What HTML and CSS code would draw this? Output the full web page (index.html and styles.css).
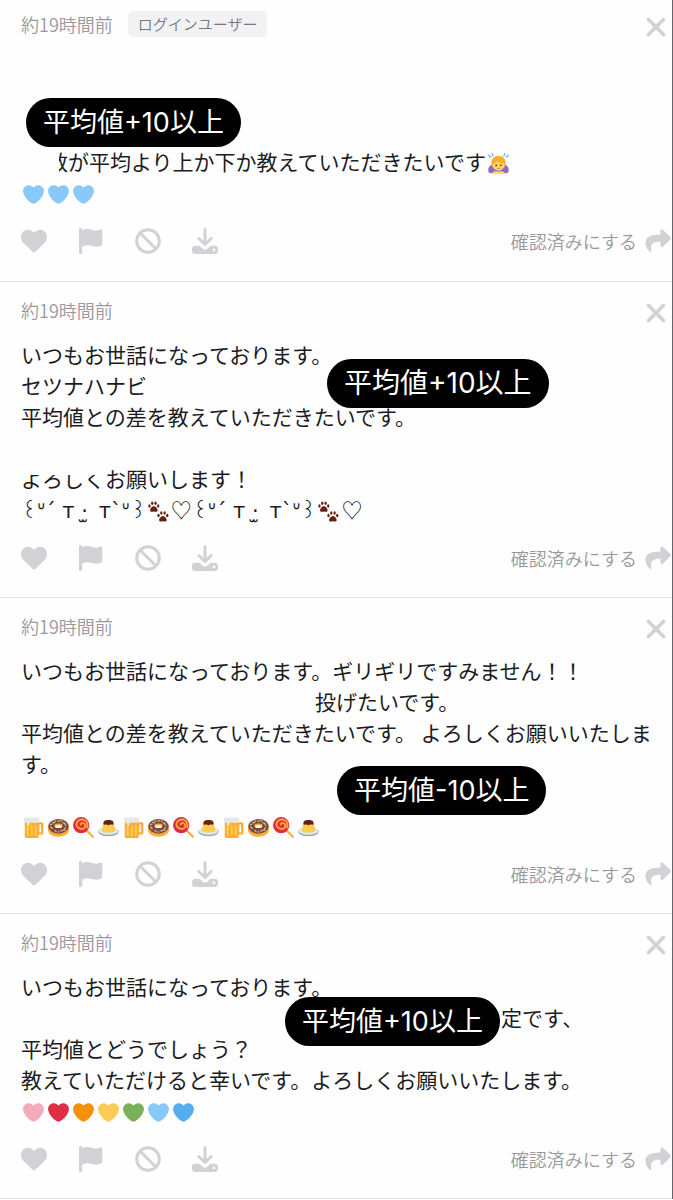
FILE: index.html
```html
<!DOCTYPE html>
<html lang="ja">
<head>
    <meta charset="UTF-8">
    <meta name="viewport" content="width=device-width, initial-scale=1.0">
    <title>メッセージ一覧</title>
    <link rel="stylesheet" href="styles.css">
</head>
<body>
    <!-- アイコン定義 -->
    <svg class="sprite" aria-hidden="true">
        <symbol id="close" viewBox="0 0 20 20"><path d="M2.5 2.5l15 15M17.5 2.5l-15 15" fill="none" stroke="currentColor" stroke-width="3.6" stroke-linecap="round"/></symbol>
        <symbol id="like" viewBox="0 0 26 26"><path d="M13 24.5c-.5 0-.9-.2-1.200-.5L2.300 14.800C-1 11.300-.6 5.600 3 3c3-2.200 7-1.300 9.300 1.200l.7.700.7-.7C16 1.700 20 .8 23 3c3.600 2.600 4 8.300.7 11.800L14.200 24c-.3.300-.7.500-1.200.5z" fill="currentColor"/></symbol>
        <symbol id="flag" viewBox="0 0 26 26"><path d="M2.600 0C3.500 0 4.200.7 4.200 1.600v.6c4.600-1.600 7.300-1.300 10.200-.2 3 1.100 5.200.8 8-.4.900-.4 1.800.2 1.800 1.100v13.600c0 .6-.3 1.100-.9 1.300-3.500 1.500-6.300 1.500-9.400.4-3.100-1-6-.9-9.700.4v6c0 .9-.7 1.600-1.600 1.600S1 25.300 1 24.400V1.600C1 .7 1.700 0 2.600 0z" fill="currentColor"/></symbol>
        <symbol id="ban" viewBox="0 0 26 26"><g fill="none" stroke="currentColor" stroke-width="3"><circle cx="13" cy="13" r="11.300"/><path d="M5 5l16 16"/></g></symbol>
        <symbol id="save" viewBox="0 0 26 26"><path d="M13 1.500v14M6.800 10.500l6.200 6 6.200-6" fill="none" stroke="currentColor" stroke-width="3" stroke-linecap="round" stroke-linejoin="round"/><path d="M3 17.800h4.500l3.600 3.300c1.100 1 2.700 1 3.800 0l3.600-3.300H23c1.700 0 3 1.300 3 3v2.200c0 1.700-1.300 3-3 3H3c-1.700 0-3-1.300-3-3v-2.200c0-1.700 1.300-3 3-3zm19 2.800a1.300 1.300 0 1 0 0 2.600 1.300 1.300 0 0 0 0-2.600z" fill="currentColor" fill-rule="evenodd"/></symbol>
        <symbol id="share" viewBox="0 0 26 26"><path d="M15.500 3.200c0-1.400 1.600-2.100 2.600-1.200l7.300 7.100c.7.700.7 1.700 0 2.300l-7.300 7.200c-1 .9-2.600.2-2.600-1.200v-3.700C8.300 13.600 4.600 16 6.600 22.700c.3 1.100-.9 1.800-1.700 1.100C2.300 21.600.4 18.600.4 15.300.4 8.600 6.300 6.700 15.500 6.600z" fill="currentColor"/></symbol>

        <symbol id="heart" viewBox="0 0 36 36"><path d="M35.885 11.833c0-5.450-4.418-9.868-9.867-9.868-3.308 0-6.227 1.633-8.018 4.129-1.791-2.496-4.710-4.129-8.017-4.129-5.450 0-9.868 4.417-9.868 9.868 0 .772.098 1.520.266 2.241C1.751 22.587 11.216 31.568 18 34.034c6.783-2.466 16.249-11.447 17.617-19.959.170-.721.268-1.469.268-2.242z" fill="currentColor"/></symbol>
        <symbol id="bow" viewBox="0 0 36 36">
            <path d="M1 33c-2-8 2-13 8-13h18c6 0 10 5 8 13-2 2-7 2-10 1H11c-3 1-8 1-10-1z" fill="#9268ca"/>
            <path d="M8 33c3-2 7-2 10-1 3-1 7-1 10 1v3H8z" fill="#ffdc5d"/>
            <circle cx="18" cy="17" r="12.500" fill="#ffac33"/>
            <path d="M8 19c3-1 5-2 7-5 3 3 8 4 13 4 0 8-4 12-10 12S8 26 8 19z" fill="#ffdc5d"/>
            <circle cx="14" cy="21" r="1.500" fill="#662113"/><circle cx="22" cy="21" r="1.500" fill="#662113"/>
            <path d="M15 26q3 1 6 0" fill="none" stroke="#c1694f" stroke-width="1.500"/>
            <path d="M7 1l2 4M1 4l4 3M29 1l-2 4M35 4l-4 3" stroke="#5dadec" stroke-width="2" stroke-linecap="round"/>
        </symbol>
        <symbol id="beer" viewBox="0 0 36 36">
            <path d="M26 9h6c2 0 3 1 3 3v15c0 2-1 3-3 3h-6zm2 4v13h3V13z" fill="#ffac33" fill-rule="evenodd"/>
            <path d="M3 8h24v25c0 2-1 3-3 3H6c-2 0-3-1-3-3z" fill="#ffac33"/>
            <path d="M8 16v15M15 16v15M22 16v15" stroke="#ffcc4d" stroke-width="3.500" stroke-linecap="round"/>
            <path d="M1 2q4-3 8 0 5-3 9 0 5-3 9 0 2 5-1 8H11v3c-1 2-4 2-4 0v-3H3Q0 7 1 2z" fill="#e6e7e8"/>
        </symbol>
        <symbol id="donut" viewBox="0 0 36 36">
            <path d="M0 17h36v5c0 7-8 12-18 12S0 29 0 22z" fill="#ffac33"/>
            <ellipse cx="18" cy="16" rx="17.500" ry="12.500" fill="#7b4b3e"/>
            <ellipse cx="18" cy="15" rx="7" ry="4" fill="#ffac33"/>
            <ellipse cx="18" cy="16.500" rx="5.500" ry="2.500" fill="#fff"/>
            <path d="M5 17l2 3M8 9l3 1M17 7l3-1M26 10l3 1M30 18l-2 3M22 24l3-1M12 23l2 2" stroke="#f4abba" stroke-width="2.200" stroke-linecap="round"/>
            <path d="M12 6l1 2M4 13l3-1M24 6l-1 2M31 14l-2-1M18 25v1M27 22l2 1" stroke="#a6d388" stroke-width="2" stroke-linecap="round"/>
        </symbol>
        <symbol id="lollipop" viewBox="0 0 36 36">
            <path d="M22 22l12 12" stroke="#ffac33" stroke-width="3.500" stroke-linecap="round"/>
            <circle cx="14" cy="14" r="14" fill="#dd2e44"/>
            <path d="M14 14c-2-3 3-6 6-2 4 6-4 11-10 7C2 14 7 4 16 4c7 1 11 8 8 15" fill="none" stroke="#ffac33" stroke-width="3"/>
        </symbol>
        <symbol id="pudding" viewBox="0 0 36 36">
            <ellipse cx="18" cy="25" rx="18" ry="8" fill="#99aab5"/><ellipse cx="18" cy="23.500" rx="17.500" ry="7" fill="#e1e8ed"/>
            <path d="M10 8h16l4 15c-2 5-22 5-24 0z" fill="#ffcc4d"/>
            <path d="M10 8c0-4 16-4 16 0l1 4c-1 2-3 1-5 1s-2 1-4 1-2-1-4-1-4 1-5-1z" fill="#662113"/>
        </symbol>
        <symbol id="paws" viewBox="0 0 36 36">
            <g id="paw" fill="#662113"><path d="M3.500 16c0-3 3-7 6.500-7s6.500 4 6.500 7c0 3-3 3-6.500 2-3.500 1-6.500 1-6.500-2z"/><ellipse cx="2.500" cy="8.500" rx="2" ry="3"/><ellipse cx="7.300" cy="4" rx="2" ry="3"/><ellipse cx="13" cy="4" rx="2" ry="3"/><ellipse cx="17.500" cy="8.500" rx="2" ry="3"/></g>
            <use href="#paw" x="15.500" y="16.500"/>
        </symbol>
    </svg>

    <main class="messages">
        <article class="message first">
            <header class="message-header">
                <time>約19時間前</time>
                <span class="tag">ログインユーザー</span>
                <button class="close" aria-label="閉じる"><svg><use href="#close"/></svg></button>
            </header>
            <div class="message-body">
                <p><br></p>
                <p><br></p>
                <p><br></p>
                <p class="indent-small"><span class="cut-half">数</span>が平均より上か下か教えていただきたいです<svg class="emoji"><use href="#bow"/></svg></p>
                <p><svg class="emoji light-blue"><use href="#heart"/></svg><svg class="emoji light-blue"><use href="#heart"/></svg><svg class="emoji light-blue"><use href="#heart"/></svg></p>
            </div>
            <footer class="message-footer">
                <button aria-label="いいね"><svg><use href="#like"/></svg></button>
                <button aria-label="通報"><svg><use href="#flag"/></svg></button>
                <button aria-label="ブロック"><svg><use href="#ban"/></svg></button>
                <button aria-label="保存"><svg><use href="#save"/></svg></button>
                <button class="confirm">確認済みにする</button>
                <button aria-label="返信"><svg><use href="#share"/></svg></button>
            </footer>
            <strong class="score score-1">平均値+10以上</strong>
        </article>

        <article class="message">
            <header class="message-header">
                <time>約19時間前</time>
                <button class="close" aria-label="閉じる"><svg><use href="#close"/></svg></button>
            </header>
            <div class="message-body">
                <p>いつもお世話になっております。</p>
                <p>セツナハナビ</p>
                <p>平均値との差を教えていただきたいです。</p>
                <p><br></p>
                <p><span class="cut-top">よろしく</span>お願いします！</p>
                <p><span class="kaomoji">꒰ᐡ´ т ·̫ &thinsp;т`ᐡ꒱</span><svg class="emoji"><use href="#paws"/></svg>♡<span class="kaomoji">꒰ᐡ´ т ·̫ &thinsp;т`ᐡ꒱</span><svg class="emoji"><use href="#paws"/></svg>♡</p>
            </div>
            <footer class="message-footer">
                <button aria-label="いいね"><svg><use href="#like"/></svg></button>
                <button aria-label="通報"><svg><use href="#flag"/></svg></button>
                <button aria-label="ブロック"><svg><use href="#ban"/></svg></button>
                <button aria-label="保存"><svg><use href="#save"/></svg></button>
                <button class="confirm">確認済みにする</button>
                <button aria-label="返信"><svg><use href="#share"/></svg></button>
            </footer>
            <strong class="score score-2">平均値+10以上</strong>
        </article>

        <article class="message">
            <header class="message-header">
                <time>約19時間前</time>
                <button class="close" aria-label="閉じる"><svg><use href="#close"/></svg></button>
            </header>
            <div class="message-body">
                <p>いつもお世話になっております。ギリギリですみません！！</p>
                <p class="indent-medium">投げたいです。</p>
                <p>平均値との差を教えていただきたいです。 よろしくお願いいたします。</p>
                <p><br></p>
                <p><svg class="emoji"><use href="#beer"/></svg><svg class="emoji"><use href="#donut"/></svg><svg class="emoji"><use href="#lollipop"/></svg><svg class="emoji"><use href="#pudding"/></svg><svg class="emoji"><use href="#beer"/></svg><svg class="emoji"><use href="#donut"/></svg><svg class="emoji"><use href="#lollipop"/></svg><svg class="emoji"><use href="#pudding"/></svg><svg class="emoji"><use href="#beer"/></svg><svg class="emoji"><use href="#donut"/></svg><svg class="emoji"><use href="#lollipop"/></svg><svg class="emoji"><use href="#pudding"/></svg></p>
            </div>
            <footer class="message-footer">
                <button aria-label="いいね"><svg><use href="#like"/></svg></button>
                <button aria-label="通報"><svg><use href="#flag"/></svg></button>
                <button aria-label="ブロック"><svg><use href="#ban"/></svg></button>
                <button aria-label="保存"><svg><use href="#save"/></svg></button>
                <button class="confirm">確認済みにする</button>
                <button aria-label="返信"><svg><use href="#share"/></svg></button>
            </footer>
            <strong class="score score-3">平均値-10以上</strong>
        </article>

        <article class="message">
            <header class="message-header">
                <time>約19時間前</time>
                <button class="close" aria-label="閉じる"><svg><use href="#close"/></svg></button>
            </header>
            <div class="message-body">
                <p>いつもお世話になっております。</p>
                <p class="indent-large">定です、</p>
                <p>平均値とどうでしょう？</p>
                <p>教えていただけると幸いです。よろしくお願いいたします。</p>
                <p><svg class="emoji pink"><use href="#heart"/></svg><svg class="emoji red"><use href="#heart"/></svg><svg class="emoji orange"><use href="#heart"/></svg><svg class="emoji yellow"><use href="#heart"/></svg><svg class="emoji green"><use href="#heart"/></svg><svg class="emoji light-blue"><use href="#heart"/></svg><svg class="emoji blue"><use href="#heart"/></svg></p>
            </div>
            <footer class="message-footer">
                <button aria-label="いいね"><svg><use href="#like"/></svg></button>
                <button aria-label="通報"><svg><use href="#flag"/></svg></button>
                <button aria-label="ブロック"><svg><use href="#ban"/></svg></button>
                <button aria-label="保存"><svg><use href="#save"/></svg></button>
                <button class="confirm">確認済みにする</button>
                <button aria-label="返信"><svg><use href="#share"/></svg></button>
            </footer>
            <strong class="score score-4">平均値+10以上</strong>
        </article>
    </main>
</body>
</html>
```
FILE: styles.css
```css
/* Estilo global */
body {
    margin: 0;
    background: #fefefe;
    color: #1c1c1e;
    font-family: "Noto Sans CJK JP", sans-serif;
}

.sprite {
    position: absolute;
    width: 0;
    height: 0;
}

.messages {
    border-right: 1px solid #66666a;
}

/* メッセージ */
.message {
    position: relative;
    padding: 16px 0 26px 21px;
    border-bottom: 1px solid #e3e3e6;
}

.message.first {
    padding-top: 12px;
    padding-bottom: 27px;
}

.message-header {
    display: flex;
    align-items: center;
    height: 24px;
    padding-right: 6px;
    color: #98989e;
    font-size: 18px;
    font-weight: 350;
}

.tag {
    margin-left: 15px;
    padding: 0 10px;
    border-radius: 6px;
    background: #f2f2f5;
    color: #77777c;
    font-size: 15px;
    line-height: 26px;
}

button {
    padding: 0;
    border: none;
    background: none;
    color: #d1d1d6;
    font: inherit;
    cursor: pointer;
}

button svg {
    display: block;
    width: 26px;
    height: 26px;
}

.close {
    margin-left: auto;
    padding-top: 6px;
}

.close svg {
    width: 20px;
    height: 20px;
}

.message-body {
    margin: 17px 10px 20px 0;
    font-size: 21px;
    line-height: 31px;
}

.message-body p {
    margin: 0;
}

.message-footer {
    display: flex;
    align-items: center;
    gap: 31px;
    height: 26px;
    padding-right: 1px;
}

.message-footer .confirm {
    margin-left: auto;
    margin-right: -23px;
    color: #98989e;
    font-size: 18px;
    font-weight: 350;
    line-height: 26px;
}

/* 消した部分の余白 */
.indent-small {
    padding-left: 26px;
}

.indent-medium {
    padding-left: 294px;
}

.indent-large {
    padding-left: 480px;
}

.cut-half,
.cut-top {
    position: relative;
}

.cut-half::before,
.cut-top::before {
    content: "";
    position: absolute;
    top: 0;
    left: 0;
    background: #fefefe;
}

.cut-half::before {
    width: 12px;
    height: 100%;
}

.cut-top::before {
    width: 100%;
    height: 12px;
}

/* 絵文字 */
.emoji {
    width: 21px;
    height: 21px;
    margin: 0 2px;
    vertical-align: -4px;
}

.kaomoji {
    font-family: "DejaVu Sans", "Noto Sans CJK JP", sans-serif;
    line-height: 1;
}

.light-blue { color: #88c9f9; }
.pink { color: #f4abba; }
.red { color: #dd2e44; }
.orange { color: #f4900c; }
.yellow { color: #fdcb58; }
.green { color: #78b159; }
.blue { color: #55acee; }

/* 平均値ラベル */
.score {
    position: absolute;
    padding: 0 17px;
    border-radius: 25px;
    background: #000;
    color: #fff;
    font-family: Inter, "Noto Sans CJK JP", sans-serif;
    font-size: 27px;
    font-weight: 400;
    line-height: 49px;
    white-space: nowrap;
}

.score-1 {
    top: 98px;
    left: 26px;
}

.score-2 {
    top: 77px;
    left: 327px;
    font-size: 28px;
}

.score-3 {
    top: 168px;
    left: 337px;
}

.score-4 {
    top: 83px;
    left: 285px;
}
```
